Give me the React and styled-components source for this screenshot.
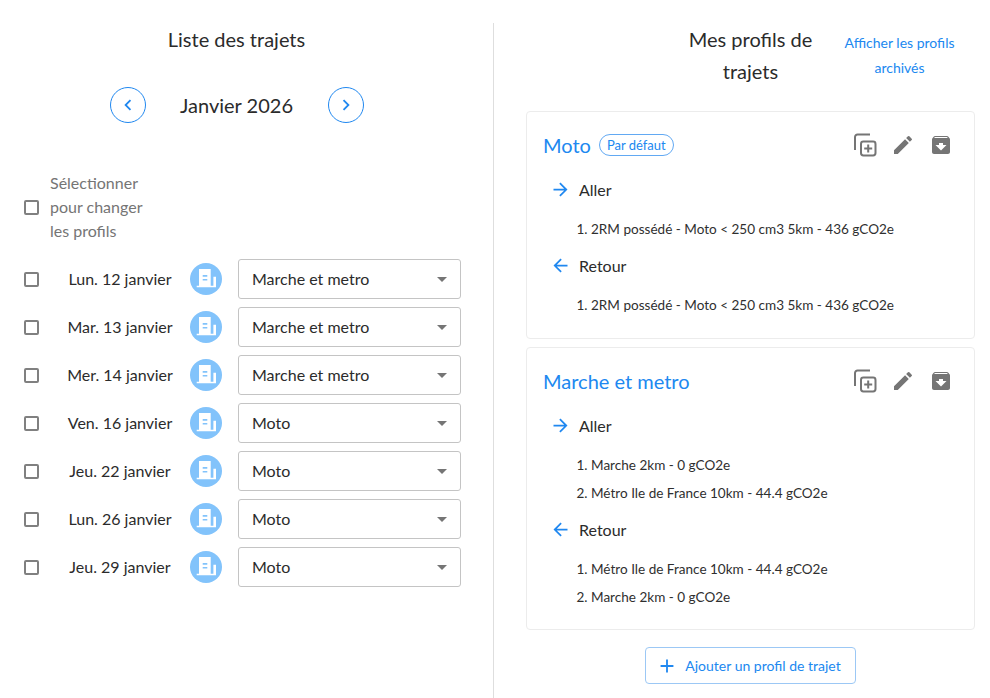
import React from "react";
import styled, { createGlobalStyle } from "styled-components";
import {
  MdArchive,
  MdArrowBack,
  MdArrowForward,
  MdChevronLeft,
  MdChevronRight,
  MdEdit,
  MdAdd,
} from "react-icons/md";

const BLUE = "#2088f0";

const GlobalStyle = createGlobalStyle`
  html, body {
    margin: 0;
    height: 698px;
    overflow: hidden;
    background: #fff;
    font-family: Lato, "Liberation Sans", sans-serif;
    color: #2b2b2b;
  }
`;

const Page = styled.div`
  display: flex;
  width: 990px;
  height: 698px;
  box-sizing: border-box;
  padding-top: 23px;
`;

const LeftColumn = styled.section`
  width: 494px;
  box-sizing: border-box;
  border-right: 1px solid #dedede;
  padding: 0 32px 0 23px;
`;

const RightColumn = styled.section`
  flex: 1;
  box-sizing: border-box;
  padding: 0 15px 0 32px;
  display: flex;
  flex-direction: column;
`;

const ListTitle = styled.h2`
  margin: 0;
  font-size: 20px;
  font-weight: 400;
  line-height: 32px;
  text-align: center;
  padding-right: 11px;
`;

const MonthNav = styled.div`
  display: flex;
  align-items: center;
  justify-content: center;
  margin-top: 32px;
  padding-right: 11px;
`;

const MonthLabel = styled.div`
  width: 182px;
  text-align: center;
  font-size: 20px;
  line-height: 36px;
`;

const RoundButton = styled.button`
  width: 36px;
  height: 36px;
  padding: 0;
  border: 1px solid ${BLUE};
  border-radius: 50%;
  background: #fff;
  color: ${BLUE};
  display: flex;
  align-items: center;
  justify-content: center;
  font-size: 22px;
`;

const SelectAll = styled.div`
  display: flex;
  align-items: center;
  margin-top: 48px;
  margin-bottom: 16px;
`;

const SelectAllText = styled.div`
  width: 100px;
  margin-left: 11px;
  font-size: 16px;
  line-height: 24px;
  color: #757575;
`;

const Box = styled.span`
  flex: none;
  display: block;
  width: 15px;
  height: 15px;
  margin: 0 0.5px;
  box-sizing: border-box;
  border: 2px solid #808080;
  border-radius: 2px;
`;

const Rows = styled.div`
  display: flex;
  flex-direction: column;
  gap: 8px;
`;

const TripRow = styled.div`
  display: flex;
  align-items: center;
  height: 40px;
`;

const DateLabel = styled.div`
  width: 135px;
  margin-left: 14px;
  margin-right: 3px;
  padding-bottom: 2px;
  text-align: center;
  font-size: 16px;
  white-space: nowrap;
`;

const BuildingBadge = styled.div`
  flex: none;
  width: 32px;
  height: 32px;
  margin-right: 16px;

  svg {
    display: block;
  }
`;

const SelectBox = styled.div`
  flex: none;
  width: 223px;
  height: 40px;
  box-sizing: border-box;
  border: 1px solid #c4c4c4;
  border-radius: 3px;
  padding: 0 13px 2px 13px;
  display: flex;
  align-items: center;
  justify-content: space-between;
  font-size: 16px;
`;

const Caret = styled.span`
  width: 0;
  height: 0;
  margin-top: 2px;
  border-left: 5px solid transparent;
  border-right: 5px solid transparent;
  border-top: 5px solid #757575;
`;

const ProfilesHeader = styled.div`
  display: flex;
  height: 88px;
`;

const ProfilesTitle = styled.h2`
  margin: 0 0 0 145px;
  width: 159px;
  font-size: 20px;
  font-weight: 400;
  line-height: 32px;
  text-align: center;
`;

const ArchivedLink = styled.a`
  margin-left: 11px;
  width: 117px;
  margin-top: 7px;
  font-size: 14px;
  line-height: 25px;
  text-align: center;
  color: ${BLUE};
`;

const Card = styled.article`
  border: 1px solid #ececec;
  border-radius: 4px;
  padding: 0 16px;
  margin-bottom: 8px;
  height: ${(p) => p.$height}px;
  box-sizing: border-box;
`;

const CardHead = styled.div`
  display: flex;
  align-items: center;
  height: 65px;
`;

const CardTitle = styled.h3`
  margin: 0;
  font-size: 20px;
  font-weight: 400;
  color: ${BLUE};
`;

const DefaultPill = styled.span`
  margin-left: 8px;
  height: 22px;
  box-sizing: border-box;
  border: 1px solid #62a9f3;
  border-radius: 11px;
  padding: 0 7px;
  font-size: 13px;
  line-height: 20px;
  color: ${BLUE};
`;

const CardActions = styled.div`
  margin-left: auto;
  display: flex;
  align-items: center;
  gap: 14px;
  margin-right: 5px;
  color: #757575;

  svg {
    display: block;
    width: 24px;
    height: 24px;
  }
`;

const DirectionRow = styled.div`
  display: flex;
  align-items: center;
  height: 24px;
  margin: ${(p) => p.$top}px 0 0 7px;
  font-size: 16px;
  color: #2b2b2b;

  svg {
    color: ${BLUE};
    width: 21px;
    height: 21px;
    margin-right: 8px;
  }
`;

const StepList = styled.ol`
  margin: 13.5px 0 0;
  padding: 0 0 0 48px;
  font-size: 13.55px;
  line-height: 28px;
  color: #2f2f2f;
`;

const AddWrap = styled.div`
  display: flex;
  justify-content: center;
  margin-top: 9px;
`;

const AddButton = styled.button`
  width: 211px;
  height: 37px;
  box-sizing: border-box;
  border: 1px solid #9cc8f5;
  border-radius: 4px;
  background: #fff;
  color: ${BLUE};
  font-family: inherit;
  font-size: 14px;
  display: flex;
  align-items: center;
  justify-content: center;
  gap: 7px;
  padding: 0 4px 0 0;

  svg {
    width: 22px;
    height: 22px;
  }
`;

const trips = [
  ["Lun. 12 janvier", "Marche et metro"],
  ["Mar. 13 janvier", "Marche et metro"],
  ["Mer. 14 janvier", "Marche et metro"],
  ["Ven. 16 janvier", "Moto"],
  ["Jeu. 22 janvier", "Moto"],
  ["Lun. 26 janvier", "Moto"],
  ["Jeu. 29 janvier", "Moto"],
];

function BuildingIcon() {
  return (
    <svg width="32" height="32" viewBox="0 0 32 32">
      <circle cx="16" cy="16" r="16" fill="#82c3fb" />
      <path
        fill="#fff"
        fillRule="evenodd"
        d="M9 6h11.7v16.7H26v1.6H6.7v-1.6H9zM12.7 12v1.7h4.6V12zM12.7 16v1.4h4.6V16zM23.4 13.7H26v9h-2.6z"
      />
    </svg>
  );
}

function CopyAddIcon() {
  return (
    <svg viewBox="0 0 24 24" fill="none" stroke="currentColor" strokeWidth="2">
      <path d="M2 17V4a2.5 2.5 0 0 1 2.5-2.5H17" />
      <rect x="8" y="8.5" width="14.5" height="14" rx="2.4" />
      <path d="M15.2 11.5v8M11.2 15.5h8" />
    </svg>
  );
}

function ProfileCard({ name, isDefault, height, outbound, back }) {
  return (
    <Card $height={height}>
      <CardHead>
        <CardTitle>{name}</CardTitle>
        {isDefault && <DefaultPill>Par défaut</DefaultPill>}
        <CardActions>
          <CopyAddIcon />
          <MdEdit />
          <MdArchive />
        </CardActions>
      </CardHead>
      <DirectionRow $top={0}>
        <MdArrowForward />
        Aller
      </DirectionRow>
      <StepList>
        {outbound.map((step) => (
          <li key={step}>{step}</li>
        ))}
      </StepList>
      <DirectionRow $top={10.5}>
        <MdArrowBack />
        Retour
      </DirectionRow>
      <StepList>
        {back.map((step) => (
          <li key={step}>{step}</li>
        ))}
      </StepList>
    </Card>
  );
}

export default function App() {
  return (
    <Page>
      <GlobalStyle />
      <LeftColumn>
        <ListTitle>Liste des trajets</ListTitle>
        <MonthNav>
          <RoundButton>
            <MdChevronLeft />
          </RoundButton>
          <MonthLabel>Janvier 2026</MonthLabel>
          <RoundButton>
            <MdChevronRight />
          </RoundButton>
        </MonthNav>
        <SelectAll>
          <Box />
          <SelectAllText>Sélectionner pour changer les profils</SelectAllText>
        </SelectAll>
        <Rows>
          {trips.map(([date, profile]) => (
            <TripRow key={date}>
              <Box />
              <DateLabel>{date}</DateLabel>
              <BuildingBadge>
                <BuildingIcon />
              </BuildingBadge>
              <SelectBox>
                {profile}
                <Caret />
              </SelectBox>
            </TripRow>
          ))}
        </Rows>
      </LeftColumn>
      <RightColumn>
        <ProfilesHeader>
          <ProfilesTitle>Mes profils de trajets</ProfilesTitle>
          <ArchivedLink>Afficher les profils archivés</ArchivedLink>
        </ProfilesHeader>
        <ProfileCard
          name="Moto"
          isDefault
          height={228}
          outbound={["2RM possédé - Moto < 250 cm3 5km - 436 gCO2e"]}
          back={["2RM possédé - Moto < 250 cm3 5km - 436 gCO2e"]}
        />
        <ProfileCard
          name="Marche et metro"
          height={283}
          outbound={["Marche 2km - 0 gCO2e", "Métro Ile de France 10km - 44.4 gCO2e"]}
          back={["Métro Ile de France 10km - 44.4 gCO2e", "Marche 2km - 0 gCO2e"]}
        />
        <AddWrap>
          <AddButton>
            <MdAdd />
            Ajouter un profil de trajet
          </AddButton>
        </AddWrap>
      </RightColumn>
    </Page>
  );
}
